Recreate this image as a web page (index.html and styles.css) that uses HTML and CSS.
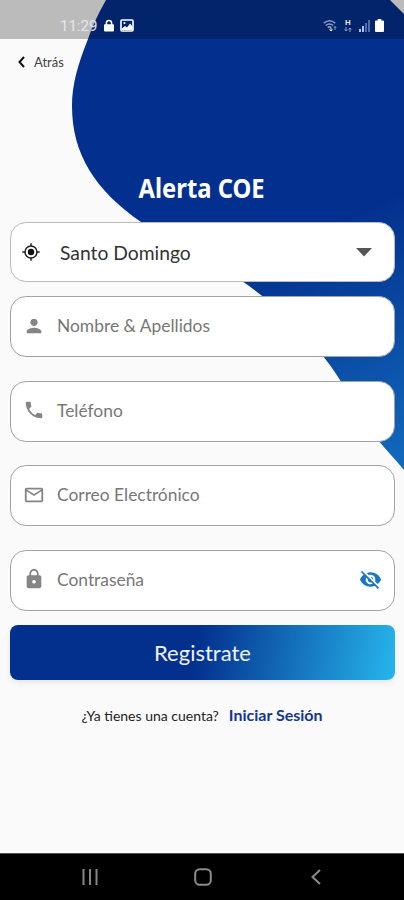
FILE: index.html
```html
<!doctype html>
<html lang="es">
<head>
    <meta charset="UTF-8">
    <title>Alerta COE</title>
    <link rel="stylesheet" href="styles.css">
</head>
<body>
    <div class="screen">
      <svg class="blob" viewBox="0 0 404 480">
        <defs>
          <linearGradient id="azul" gradientUnits="userSpaceOnUse" x1="330" y1="225" x2="440" y2="475">
            <stop offset="0" stop-color="#03308e" />
            <stop offset="1" stop-color="#136fc0" />
          </linearGradient>
        </defs>
        <path fill="url(#azul)" d="M106 0C98 14 92 27 88 39C78 64 72 84 72 106C72 154 95 190 141 222C178 247 209 258 242 281C279 307 302 329 323 356C334 370 338 377 343 385C359 411 368 427 378 440C387 451 396 460 404 470V14L390 0Z" />
      </svg>

      <header class="status">
        <span class="time">11:29</span>
        <svg class="status-lock" width="10" height="13" viewBox="0 0 10 13">
          <path d="M2.4 6V4a2.6 2.6 0 0 1 5.2 0v2" fill="none" stroke="#fff" stroke-width="1.5" />
          <rect y="5.3" width="10" height="7.2" rx="1" fill="#fff" />
        </svg>
        <svg width="14" height="13" viewBox="0 0 14 13">
          <rect x="1" y="1" width="12" height="11" rx="1" fill="none" stroke="#fff" stroke-width="1.6" />
          <path d="M2 9.5l3-2.5 2 1.5 3-4 2.5 3V11H2z" fill="#fff" />
          <circle cx="4.5" cy="4" r="1.1" fill="#fff" />
        </svg>
        <div class="signals">
          <svg width="14" height="13" viewBox="0 0 14 13" fill="none" stroke="#8a9dca" stroke-width="1.5">
            <path d="M.7 4.2q6-5 11.6 0M2.7 6.5q3.800-3 7.600 0M4.700 8.600q1.800-1.500 3.600 0" />
            <path d="M8 9v3M6.500 10.500l1.500 1.500 1.500-1.500" stroke="#fff" stroke-width="1" />
            <path d="M12 11V7.500M10.800 8.800L12 7.500l1.200 1.300" stroke-width="1" />
          </svg>
          <span class="data"><b>H</b>
            <svg width="8" height="5" viewBox="0 0 8 5" stroke="#8a9dca" fill="none"><path d="M2 0v4M.5 2.500L2 4l1.500-1.500M6 5V1M4.500 2.500L6 1l1.500 1.500" /></svg>
          </span>
          <svg width="11" height="13" viewBox="0 0 11 13">
            <path fill="#b5c1df" d="M0 10h2v3H0zM3 7h2v6H3z" />
            <path fill="#536da8" d="M6 4h2v9H6zM9 1h2v12H9z" />
          </svg>
          <svg width="9" height="13" viewBox="0 0 9 13">
            <path fill="#fff" d="M2.700 0h3.600v1.500H8a1 1 0 0 1 1 1V12a1 1 0 0 1-1 1H1a1 1 0 0 1-1-1V2.500a1 1 0 0 1 1-1h1.700z" />
          </svg>
        </div>
      </header>

      <div class="back">
        <svg width="7" height="12" viewBox="0 0 7 12"><path d="M6 1L1.500 6L6 11" fill="none" stroke="#111" stroke-width="2" /></svg>
        <span>Atrás</span>
      </div>

      <h1 class="title"><span>Alerta COE</span></h1>

      <main class="form">
        <div class="field select">
          <svg class="icon-place" width="18" height="18" viewBox="0 0 18 18">
            <circle cx="9" cy="9" r="6" fill="none" stroke="#222" stroke-width="1.500" />
            <circle cx="9" cy="9" r="3.200" fill="#111" />
            <path d="M9 .3v3M9 14.700v3M.3 9h3M14.700 9h3" stroke="#222" stroke-width="1.500" />
          </svg>
          <span class="value">Santo Domingo</span>
          <svg class="arrow" width="16" height="9" viewBox="0 0 16 9"><path d="M0 0h16L8 8.500z" fill="#555" /></svg>
        </div>

        <div class="field">
          <svg class="icon" viewBox="0 0 24 24"><path d="M12 12c2.210 0 4-1.790 4-4s-1.790-4-4-4-4 1.790-4 4 1.790 4 4 4zm0 2c-2.670 0-8 1.340-8 4v2h16v-2c0-2.660-5.330-4-8-4z" /></svg>
          <span class="label">Nombre &amp; Apellidos</span>
        </div>

        <div class="field">
          <svg class="icon" viewBox="0 0 24 24"><path d="M6.620 10.790c1.440 2.830 3.760 5.140 6.590 6.590l2.200-2.200c.27-.27.67-.36 1.020-.24 1.120.37 2.330.57 3.570.57.55 0 1 .45 1 1V20c0 .55-.45 1-1 1-9.390 0-17-7.610-17-17 0-.55.45-1 1-1h3.500c.55 0 1 .45 1 1 0 1.250.2 2.450.57 3.570.11.35.03.74-.25 1.020l-2.200 2.200z" /></svg>
          <span class="label">Teléfono</span>
        </div>

        <div class="field">
          <svg class="icon" viewBox="0 0 24 24"><path d="M20 4H4c-1.100 0-2 .9-2 2v12c0 1.100.9 2 2 2h16c1.100 0 2-.9 2-2V6c0-1.100-.9-2-2-2zm0 14H4V8l8 5 8-5v10zm-8-7L4 6h16l-8 5z" /></svg>
          <span class="label">Correo Electrónico</span>
        </div>

        <div class="field">
          <svg class="icon" viewBox="0 0 24 24"><path d="M18 8h-1V6c0-2.760-2.240-5-5-5S7 3.240 7 6v2H6c-1.100 0-2 .9-2 2v10c0 1.100.9 2 2 2h12c1.100 0 2-.9 2-2V10c0-1.100-.9-2-2-2zm-6 9c-1.100 0-2-.9-2-2s.9-2 2-2 2 .9 2 2-.9 2-2 2zm3.100-9H8.900V6c0-1.710 1.390-3.100 3.100-3.100s3.100 1.390 3.100 3.100v2z" /></svg>
          <span class="label">Contraseña</span>
          <svg class="eye" viewBox="0 0 24 24"><path d="M12 7c2.760 0 5 2.240 5 5 0 .65-.13 1.260-.36 1.830l2.920 2.920c1.510-1.260 2.700-2.890 3.430-4.750-1.730-4.390-6-7.500-11-7.500-1.400 0-2.740.25-3.980.7l2.160 2.160C10.740 7.130 11.350 7 12 7zM2 4.270l2.280 2.280.46.46C3.080 8.300 1.780 10.020 1 12c1.730 4.390 6 7.500 11 7.500 1.550 0 3.030-.3 4.380-.84l.42.42L19.730 22 21 20.730 3.270 3 2 4.270zM7.530 9.800l1.550 1.550c-.05.21-.08.43-.08.65 0 1.660 1.340 3 3 3 .22 0 .44-.03.65-.08l1.550 1.550c-.67.33-1.410.53-2.200.53-2.760 0-5-2.240-5-5 0-.79.2-1.530.53-2.200zm4.310-.78l3.150 3.150.02-.16c0-1.660-1.340-3-3-3l-.17.01z" /></svg>
        </div>

        <button class="submit">Registrate</button>
      </main>

      <p class="login">
        <span class="question">¿Ya tienes una cuenta?</span>
        <a class="link">Iniciar Sesión</a>
      </p>

      <footer class="nav">
        <svg width="16" height="16" viewBox="0 0 16 16"><path d="M1.500 0v16M8 0v16M14.500 0v16" stroke="#858585" stroke-width="2" /></svg>
        <svg class="nav-home" width="18" height="18" viewBox="0 0 18 18"><rect x="1.200" y="1.200" width="15.600" height="15.600" rx="4.500" fill="none" stroke="#8b8b8b" stroke-width="2" /></svg>
        <svg width="10" height="16" viewBox="0 0 10 16"><path d="M9 1L1.500 8L9 15" fill="none" stroke="#8b8b8b" stroke-width="2" /></svg>
      </footer>
    </div>
</body>
</html>
```

FILE: styles.css
```css
* {
  box-sizing: border-box;
}
body {
  margin: 0;
  font-family: Lato, "Liberation Sans", sans-serif;
}
svg {
  display: block;
  flex: none;
}
.screen {
  position: relative;
  display: flex;
  flex-direction: column;
  width: 404px;
  height: 900px;
  overflow: hidden;
  background-color: #fafafa;
}
/* fondo azul, detrás de todo */
.blob {
  position: absolute;
  top: 0;
  left: 0;
  width: 404px;
  height: 480px;
}
.status, .back, .title, .form, .login, .nav {
  z-index: 1;
}
.status {
  display: flex;
  align-items: center;
  height: 39px;
  padding: 12px 20px 0 60px;
  background-color: rgba(0, 0, 0, 0.25);
  color: #e6e6ea;
}
.time {
  width: 44px;
  font-family: Roboto, sans-serif;
  font-size: 15px;
  line-height: 20px;
}
.status-lock {
  margin-right: 6px;
}
.signals {
  display: flex;
  align-items: center;
  gap: 5px;
  margin-left: auto;
}
.signals svg:first-child {
  margin-right: 2px;
}
.data {
  width: 9px;
  margin-right: 1px;
  font-family: Roboto, sans-serif;
  font-size: 8px;
  line-height: 8px;
}
.data b {
  display: block;
  padding-left: 1px;
}
.back {
  display: flex;
  align-items: center;
  gap: 9px;
  height: 46px;
  padding-left: 18px;
  font-size: 13px;
  color: #444;
}
.title {
  height: 137px;
  margin: 0;
  padding-top: 86px;
  font-family: "Noto Sans", sans-serif;
  font-size: 27px;
  font-weight: 700;
  line-height: 34px;
  text-align: center;
  color: #fff;
}
.title span {
  display: inline-block;
  transform: scaleX(0.88);
}
.form {
  display: flex;
  flex-direction: column;
  padding: 0 9px 0 10px;
}
.field {
  display: flex;
  align-items: center;
  height: 61px;
  margin-bottom: 23.500px;
  padding: 0 12px 2px;
  border: 1px solid #a3a3a3;
  border-radius: 16px;
  background-color: #fff;
  color: #777;
}
.select {
  height: 60px;
  margin-bottom: 14px;
  padding: 0 22px 0 11px;
  border-color: #bbb;
}
.icon {
  width: 22px;
  height: 22px;
  margin-right: 12px;
  fill: #858585;
}
.icon-place {
  margin-right: 20px;
}
.value {
  font-size: 19.300px;
  color: #333;
}
.label {
  font-size: 17.400px;
}
.arrow {
  margin-left: auto;
}
.eye {
  width: 23px;
  height: 23px;
  margin-left: auto;
  fill: #1976c5;
}
.submit {
  height: 55px;
  margin: -9px 0 0;
  padding: 0 0 1px;
  border: 0;
  border-radius: 8px;
  background: linear-gradient(100deg, #032f8d 48%, #25b0e8 98%);
  box-shadow: 0 3px 6px rgba(0, 0, 0, 0.08);
  font-family: inherit;
  font-size: 22px;
  color: #eef3ff;
}
.login {
  display: flex;
  align-items: baseline;
  justify-content: center;
  gap: 10px;
  margin: 24px 0 0;
  line-height: 22px;
}
.question {
  font-size: 14px;
  color: #222;
}
.link {
  font-size: 16px;
  font-weight: 700;
  color: #13378f;
}
.nav {
  display: flex;
  align-items: center;
  justify-content: space-between;
  height: 47px;
  margin-top: auto;
  padding: 0 83px 0 82px;
  border-top: 1px solid #555;
  background-color: #000;
}
.nav-home {
  margin-right: 3px;
}
```
